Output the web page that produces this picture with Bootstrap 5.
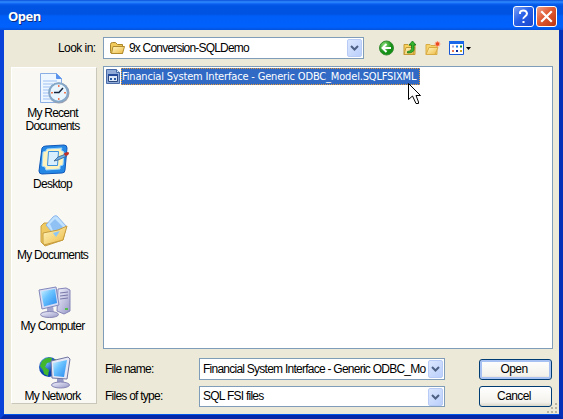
<!DOCTYPE html>
<html lang="en">
<head>
<meta charset="utf-8">
<title>Open</title>
<link rel="stylesheet" href="https://cdn.jsdelivr.net/npm/bootstrap@5.3.0/dist/css/bootstrap.min.css">
<style>
body{width:563px;height:419px;overflow:hidden;background:#fff;font:12px/13px "Liberation Sans",Arial,sans-serif;letter-spacing:-.75px;color:#000}
svg{display:block;flex:none}
.dialog-window{width:563px;height:419px;background:#ece9d8;border:4px solid #0a50e0;border-top:0;border-radius:8px 8px 0 0;border-left-color:#0842d8;border-right-color:#0530b8;border-bottom-color:#0428a8;box-shadow:inset 0 -1px #0055ea}
.title-strip{height:30px;margin:0 -4px;padding:2px 6px 0 8px;gap:2px;background:linear-gradient(#0a4fd8 0,#2f8cff 2px,#0b5ff0 4px,#0054e3 6px,#0053e1 14px,#005ef8 16px,#0061fc 27px,#0450dc 30px)}
.title-text{font:bold 13px/28px "Open Sans","Noto Sans",sans-serif;letter-spacing:-.5px;color:#fff;text-shadow:1px 1px #0a2a80}
.cap-btn{width:21px;height:21px;border:1px solid #fff;border-radius:3px;padding:0;background:linear-gradient(135deg,#7ca0f5,#2860e8 45%,#1846cb)}
.cap-close{background:linear-gradient(135deg,#f0a088,#e05a32 45%,#bd3511)}
.tool-row{height:36px;padding:7px 0 0 54px}
.tool-icons{margin:3px 0 0 14px;gap:7px}
.combo{background:#fff;border:1px solid #7f9db9;height:22px;padding:1px}
.combo-btn{width:15px;height:18px;border:1px solid #b8cbf6;border-radius:2px;background:linear-gradient(135deg,#dce7ff,#bacffb);flex:none}
.look-label{width:45px;line-height:22px;letter-spacing:-.55px}
.look-combo{width:261px}
.w-fit{white-space:pre}
.main-row{padding-left:7px;gap:6px}
.places{width:86px;height:337px;margin-top:1px;background:#f9f8f3;border:1px solid #fff;border-right-color:#c9c7ba;border-bottom-color:#c9c7ba;padding-top:5px;overflow:hidden}
.place{height:71px;flex:none;text-align:center}
.place:last-child{margin-top:-1px}
.place svg{margin-bottom:1px}
.place span{margin-right:3px}
.files{width:450px;height:283px;background:#fff;border:1px solid #7f9db9;padding:1px 2px}
.sel{height:17px;width:299px;margin-left:1px;background:#316ac5;color:#fff;border:1px dotted #e69a3a;font:11px/16px "DejaVu Sans Condensed","DejaVu Sans",sans-serif;letter-spacing:-.17px}
.fields{padding-top:9px}
.field-label{width:96px;padding-left:2px}
.field-combo{width:246px}
.field-text{padding-left:2px}
.xp-btn{width:73px;height:21px;margin-left:34px;border:1px solid #003c74;border-radius:3px;background:linear-gradient(#fff,#f3f2ec 80%,#dad6ca);color:#000;line-height:19px;letter-spacing:-.6px;padding:0 3px 0 0;text-align:center}
.xp-default{box-shadow:inset 0 0 0 2px #a6c1f2}
.row-two{height:21px;margin-top:6px}
.pointer{position:absolute;left:408px;top:83px}
.grip{position:absolute;left:547px;top:403px}
.dir-name{letter-spacing:-.8px;padding-left:3px}
</style>
<script src="https://cdn.jsdelivr.net/npm/bootstrap@5.3.0/dist/js/bootstrap.bundle.min.js"></script>
</head>
<body>
<svg width="0" height="0" class="position-absolute"><defs>
<linearGradient id="scr" x2="1" y2="1"><stop stop-color="#d4f2ff"/><stop offset=".4" stop-color="#6cc4ff"/><stop offset="1" stop-color="#2889ed"/></linearGradient>
<linearGradient id="fold" x2="1" y2="1"><stop stop-color="#fff8c5"/><stop offset="1" stop-color="#edb840"/></linearGradient>
<linearGradient id="metal" x2="1" y2="1"><stop stop-color="#f4f4ff"/><stop offset="1" stop-color="#9797c6"/></linearGradient>
<radialGradient id="globe" cx=".35" cy=".3"><stop stop-color="#79bcff"/><stop offset="1" stop-color="#0742ae"/></radialGradient>
<radialGradient id="green" cx=".35" cy=".3"><stop stop-color="#8ce07c"/><stop offset="1" stop-color="#159016"/></radialGradient>
</defs></svg>
<main class="dialog-window">
<header class="title-strip d-flex align-items-center">
 <div class="title-text me-auto">Open</div>
 <button class="cap-btn d-flex" aria-label="Help"><svg width="19" height="19"><path d="M6 7V5.500Q6.500 3.500 9.500 3.500T13 6.500Q13 8 11 9.500T9.500 12M9.500 14v2" fill="none" stroke="#fff" stroke-width="2"/></svg></button>
 <button class="cap-btn cap-close d-flex" aria-label="Close"><svg width="19" height="19"><path d="M5 5l9 9M14 5l-9 9" stroke="#fff" stroke-width="2.2" stroke-linecap="square"/></svg></button>
</header>
<div class="tool-row d-flex align-items-start">
 <label class="look-label">Look in:</label>
 <div class="combo look-combo d-flex align-items-center">
  <svg width="17" height="16" class="ms-1"><path d="M1.500 4.500q0-2 2-2h3l2 2h5v9h-11q-1 0-1-2z" fill="#f0ca5b" stroke="#aa852c"/><path d="M4 6.500h11.500l-2 7H2.500z" fill="url(#fold)" stroke="#b18b2d"/></svg>
  <span class="w-fit me-auto dir-name">9x Conversion-SQLDemo</span>
  <span class="combo-btn"><svg width="13" height="16"><path d="M3 6l3.500 3.500L10 6" fill="none" stroke="#4d6185" stroke-width="2"/></svg></span>
 </div>
 <div class="d-flex tool-icons">
  <svg width="17" height="16"><circle cx="8.500" cy="8" r="7" fill="url(#green)" stroke="#398c34"/><path d="M13 8H5M8.500 4L4.500 8l4 4" fill="none" stroke="#fff" stroke-width="2"/></svg>
  <svg width="16" height="16"><path d="M2 4.500h4l1 1h6v9H2z" fill="#f9d35b" stroke="#c49a38"/><path d="M4 7.500h9l-2 7H2z" fill="url(#fold)" stroke="#c49a38"/><path d="M5.500 11.500q4 0 4-3V5H7l3.500-4L14 5h-2v4q0 4-6.500 4z" fill="#35b52c" stroke="#13771a" stroke-width=".8"/></svg>
  <svg width="16" height="16"><path d="M1 4.500h4l1 1h6v9H1z" fill="#f6d369" stroke="#d9ab45"/><path d="M4 7.500h9l-3 7H1z" fill="url(#fold)" stroke="#d9ab45"/><path d="M12.500 1v6M9.500 4h6M10.500 2l4 4M14.500 2l-4 4" stroke="#ff9875" stroke-width="1.200"/><circle cx="12.500" cy="4" r="1.800" fill="#e84720"/></svg>
  <svg width="24" height="16"><path d="M1.500 1.500h14v13h-14z" fill="#fff" stroke="#1557d4"/><path d="M1 1h15v3H1z" fill="#1967e9"/><path d="M4 5.500h2v2H4z" fill="#aaa2cf"/><path d="M8 5.500h2v2H8z" fill="#1879e8"/><path d="M12 5.500h2v2h-2z" fill="#188c24"/><path d="M4 10h2v2H4z" fill="#e97856"/><path d="M8 10h2v2H8z" fill="#102a98"/><path d="M12 10h2v2h-2z" fill="#cfa41d"/><path d="M18 7h5l-2.500 3z"/></svg>
 </div>
</div>
<div class="d-flex main-row">
 <nav class="places d-flex flex-column">
  <div class="place d-flex flex-column align-items-center"><svg width="33" height="33"><path d="M2.500.5h16l5 5v24h-21z" fill="#eef6ff" stroke="#8baee4"/><path d="M18.500.5v5h5" fill="#5b94ee" stroke="#5b94ee"/><path d="M5 8h14M5 11h10M5 14h8M5 17h7M5 20h7M5 23h7M5 26h9" stroke="#9dc1f2"/><circle cx="21" cy="20" r="10.500" fill="#9b9fae"/><circle cx="20.500" cy="19.500" r="9.300" fill="#eaf6ff" stroke="#85a7c8" stroke-width="2"/><path d="M20.500 20l4.500-5M16 19.500h5" stroke="#14253d" stroke-width="1.500"/><path d="M20 12h1.500v2H20zM20 25h1.500v2H20zM13 19h2v1.500h-2zM26 19h2v1.500h-2z" fill="#ef7850"/></svg><span class="w-fit">My Recent
Documents</span></div>
  <div class="place d-flex flex-column align-items-center"><svg width="33" height="33"><path d="M4 4q1-2 4-2l18-1q3 0 3 3l-2 22q0 3-3 3L4 30q-3 0-3-3z" fill="#2588e5" stroke="#1159b8"/><path d="M9 5l15-1-1 2 3 2-1 13-3 1v3l-14 1-1-3-3-1 1-14 3-1z" fill="#fff3bd" stroke="#9bd5fb"/><path d="M10.500 7.500h10l-1 14h-10z" fill="#d8efff" stroke="#3b91dd"/><path d="M16 17l4-4 8-3 1 2-9 4z" fill="#6eafe5" stroke="#365d88" stroke-width=".8"/><path d="M26 9l4-1q2 1 0 3l-3 1z" fill="#c52e22"/></svg><span>Desktop</span></div>
  <div class="place d-flex flex-column align-items-center"><svg width="33" height="33"><path d="M3 11l3-3h4l3 4 15 0-3 13L7 31l-4-4z" fill="#efca62" stroke="#caa044"/><path d="M8 10L15 2q2-2 4-1l9 10-9 12z" fill="#c0e2ff" stroke="#8ab5ea"/><path d="M12 9l5-5 8 8-8 8z" fill="#8fc1f5"/><path d="M5 18l15-3 9-4-4 14-19 5-1-2z" fill="url(#fold)" stroke="#c69c3d"/><path d="M15 18l7-2-4 6z" fill="#8cc7f5"/></svg><span>My Documents</span></div>
  <div class="place d-flex flex-column align-items-center"><svg width="33" height="33"><path d="M20 3l8-1 4 2v21l-6 3-7-3z" fill="url(#metal)" stroke="#8585b8"/><path d="M22 7l8-1M22 10l8-1M22 13l8-1" stroke="#7778a8"/><path d="M27 22h3v2h-3z" fill="#54bd50"/><path d="M9 21l6-1 1 7H9z" fill="#a4a5cf"/><ellipse cx="11.500" cy="28.500" rx="9" ry="3" fill="url(#metal)" stroke="#8585b4"/><path d="M1 4l17-3 3 18-17 4z" fill="#d8ddf5" stroke="#8288bb"/><path d="M3 5.500l14-2.500 2 14-13 3.500z" fill="url(#scr)"/></svg><span>My Computer</span></div>
  <div class="place d-flex flex-column align-items-center"><svg width="33" height="33"><circle cx="11" cy="11" r="10" fill="url(#globe)"/><path d="M4 5q5-5 10-3l-1 4-4 1-2 4 4 3-1 6-4-2-1-4-3-4zM15 4l3-1 3 5-3 2z" fill="#42b62c"/><path d="M19 22l6-1 1 6h-7z" fill="#9699c5"/><ellipse cx="22.500" cy="29" rx="9" ry="3" fill="url(#metal)" stroke="#8585b4"/><path d="M13 5l17-4 2 2-3 20-15-1z" fill="#e7e8f5" stroke="#70759f"/><path d="M15 7l14-3-3 17-10-1z" fill="url(#scr)"/></svg><span>My Network</span></div>
 </nav>
 <section>
  <div class="files">
   <div class="d-flex align-items-start"><svg width="14" height="17"><path d="M.5 1.500h10l3 3v11H.5z" fill="#91abd8" stroke="#496ca9"/><path d="M10.500 1.500v3h3" fill="#dbe9fc" stroke="#496ca9"/><path d="M2.500 6.500h9v7h-9z" fill="#dce7f7" stroke="#2a477e"/><path d="M2 6h10v2H2z" fill="#244b99"/><path d="M4 10h2v2H4zM8 10h2v2H8z" fill="#2b5da6"/></svg><div class="sel w-fit">Financial System Interface - Generic ODBC_Model.SQLFSIXML</div></div>
  </div>
  <div class="fields">
   <div class="d-flex align-items-center"><label class="field-label">File name:</label><div class="combo field-combo d-flex align-items-center"><span class="w-fit me-auto field-text">Financial System Interface - Generic ODBC_Mo</span><span class="combo-btn"><svg width="13" height="16"><path d="M3 6l3.500 3.500L10 6" fill="none" stroke="#4d6185" stroke-width="2"/></svg></span></div><button class="xp-btn xp-default">Open</button></div>
   <div class="d-flex align-items-center row-two"><label class="field-label">Files of type:</label><div class="combo field-combo d-flex align-items-center h-100"><span class="w-fit me-auto field-text">SQL FSI files</span><span class="combo-btn"><svg width="13" height="16"><path d="M3 6l3.500 3.500L10 6" fill="none" stroke="#4d6185" stroke-width="2"/></svg></span></div><button class="xp-btn">Cancel</button></div>
  </div>
 </section>
</div>
</main>
<svg class="pointer" width="13" height="22"><path d="M.5.5v16l4-3.500 3.500 7.500h2.500V19L8 12.500h4.500z" fill="#fff" stroke="#000"/></svg>
<svg class="grip" width="12" height="12"><path d="M8 0h2v2H8zM4 4h2v2H4zM8 4h2v2H8zM0 8h2v2H0zM4 8h2v2H4zM8 8h2v2H8z" fill="#b8b4a2"/></svg>
</body>
</html>
